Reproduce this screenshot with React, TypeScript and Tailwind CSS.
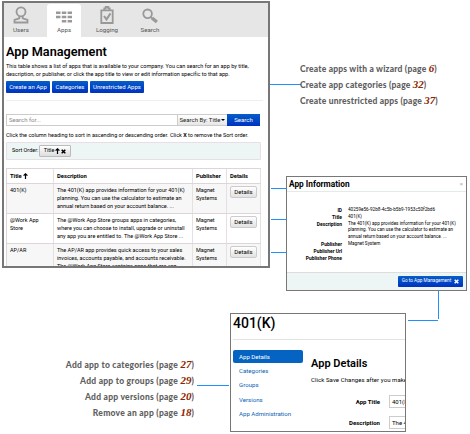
import type { ReactNode } from "react";

const tabs = ["Users", "Apps", "Logging", "Search"];

function TabIcon({ name }: { name: string }) {
  return (
    <svg width="18" height="18" viewBox="0 0 18 18" fill="none" stroke="#999" strokeWidth="1.8">
      {name === "Users" && (
        <>
          <circle cx="9" cy="5.8" r="4.5" />
          <path d="M7.3 10v2.4L2.5 14v2.5h13V14l-4.8-1.6V10" />
        </>
      )}
      {name === "Apps" && (
        <path d="M1 6.8h4.5M6.8 6.8h4.5M12.6 6.8H17M1 11h4.5M6.8 11h4.5M12.6 11H17M6.8 15.2h4.5M12.6 15.2H17" strokeWidth="2.6" />
      )}
      {name === "Logging" && (
        <>
          <path d="M3.3 4.4h11.4v12.6H3.3z" />
          <path d="M6.3 4V2.4h1.4V1h2.6v1.4h1.4V4" />
          <path d="M6 10l2.5 3.4 4-6" strokeWidth="2" />
        </>
      )}
      {name === "Search" && (
        <>
          <circle cx="6.6" cy="7.8" r="4.3" />
          <path d="M9.7 11l1.4 1.2" />
          <path d="M11 12l4.9 4" strokeWidth="3.4" />
        </>
      )}
    </svg>
  );
}

function Blue({ children, className }: { children: ReactNode; className: string }) {
  return (
    <button
      className={`flex shrink-0 items-center justify-center whitespace-nowrap bg-linear-to-b from-[#0a5cc8] to-[#0230c0] leading-none text-white ${className}`}
    >
      {children}
    </button>
  );
}

function SmallX() {
  return (
    <svg width="5" height="5" viewBox="0 0 5 5" stroke="currentColor" strokeWidth="1.5">
      <path d="M.7.7l3.6 3.6M4.3.7L.7 4.3" />
    </svg>
  );
}

function UpArrow() {
  return (
    <svg width="5" height="6" viewBox="0 0 5 6" stroke="currentColor" fill="none" strokeWidth="1.2">
      <path d="M2.5 6V1M.6 2.7L2.5.8l1.9 1.9" />
    </svg>
  );
}

const appText = [
  "The 401(K) app provides information for your 401(K)",
  "planning. You can use the calculator to estimate an",
  "annual return based on your account balance. ...",
];

const rows = [
  { title: ["401(K)"], text: appText, bg: "bg-[#f7f7f7]" },
  {
    title: ["@Work App", "Store"],
    text: [
      "The @Work App Store groups apps in categories,",
      "where you can choose to install, upgrade or uninstall",
      "any app you are entitled to. The @Work App Store ...",
    ],
    bg: "bg-white",
  },
  {
    title: ["AP/AR"],
    text: [
      "The AP/AR app provides quick access to your sales",
      "invoices, accounts payable, and accounts receivable.",
      "The @Work App Store contains apps that are can",
    ],
    bg: "bg-[#f7f7f7]",
  },
];

function Lines({ lines }: { lines: string[] }) {
  return (
    <>
      {lines.map((l) => (
        <div key={l}>{l}</div>
      ))}
    </>
  );
}

const grid = "grid grid-cols-[47px_139px_34px_34px]";

function Management() {
  return (
    <section className="absolute left-[2px] top-[1px] flex h-[267px] w-[268px] flex-col overflow-hidden border-2 border-[#777] bg-white text-black">
      <nav className="flex h-[34px] shrink-0 gap-[9px] bg-[#e6e6e6]">
        {tabs.map((t) => (
          <div
            key={t}
            className={`flex w-[34px] flex-col items-center text-[6.2px] leading-[8px] text-[#555] ${t === "Apps" ? "mt-[1px] rounded-t-[3px] bg-white pt-[2px]" : "pt-[3px]"}`}
          >
            <TabIcon name={t} />
            <span className="mt-[2px]">{t}</span>
          </div>
        ))}
      </nav>
      <div className="flex flex-col pl-[2px] pr-[5px]">
        <h1 className="mt-[6px] h-[18px] whitespace-nowrap text-[12.7px] font-semibold leading-[17px]">App Management</h1>
        <div className="mt-[1px] whitespace-nowrap text-[5.55px] leading-[8px]">
          <p>This table shows a list of apps that is available to your company. You can search for an app by title,</p>
          <p className="tracking-[-0.02px]">description, or publisher, or click the app title to view or edit information specific to that app.</p>
        </div>
        <div className="mt-[3px] flex gap-[2px] text-[6px]">
          <Blue className="h-[12px] w-[44px] rounded-[1px]">Create an App</Blue>
          <Blue className="h-[12px] w-[36px] rounded-[1px]">Categories</Blue>
          <Blue className="h-[12px] w-[54px] rounded-[1px]">Unrestricted Apps</Blue>
        </div>
        <hr className="mt-[7px] border-[#eee]" />
        <div className="mt-[13px] flex h-[12px] w-[254px] text-[6px] leading-none">
          <div className="flex flex-1 items-center border border-[#ccc] pl-[2px] text-[#888]">Search for...</div>
          <div className="flex w-[49px] items-center justify-center gap-[1px] border-y border-[#ccc] bg-linear-to-b from-white to-[#e6e6e6] text-[#222]">
            Search By: Title
            <svg width="4" height="3" viewBox="0 0 4 3">
              <path d="M0 0h4L2 2z" />
            </svg>
          </div>
          <Blue className="w-[33px]">Search</Blue>
        </div>
        <p className="mt-[5px] whitespace-nowrap text-[5.5px] leading-[8px]">
          Click the column heading to sort in ascending or descending order. Click <b>X</b> to remove the Sort order.
        </p>
        <div className="mt-[3px] flex h-[18px] w-[255px] items-center rounded-[1px] border border-[#e6dfe6] bg-[#edf6f5] pl-[5px] text-[5.5px] leading-none">
          <span className="w-[27px] whitespace-nowrap">Sort Order:</span>
          <button className="flex h-[12px] w-[32px] items-center justify-center gap-[1px] rounded-[1px] border border-[#bbb] bg-linear-to-b from-white to-[#ddd]">
            Title
            <UpArrow />
            <SmallX />
          </button>
        </div>
        <div className="mt-[8px] w-[255px] border-l border-t border-[#ded5da] text-[5.5px] leading-[8px]">
          <div className={`${grid} h-[14px] whitespace-nowrap text-[5.8px] font-bold leading-[14px] *:border-r *:border-[#e6dfe4] *:pl-[3px]`}>
            <div className="flex items-center gap-[1px]">
              Title <UpArrow />
            </div>
            <div>Description</div>
            <div>Publisher</div>
            <div>Details</div>
          </div>
          {rows.map((r) => (
            <div
              key={r.title[0]}
              className={`${grid} h-[30px] whitespace-nowrap border-t border-[#ded5da] *:h-[29px] *:border-r *:border-[#e6dfe4] *:pl-[3px] *:pt-[2px] ${r.bg}`}
            >
              <div>
                <Lines lines={r.title} />
              </div>
              <div>
                <Lines lines={r.text} />
              </div>
              <div>
                <Lines lines={["Magnet", "Systems"]} />
              </div>
              <div>
                <button className="flex h-[12px] w-[27px] items-center justify-center rounded-[2px] border border-[#ccc] bg-linear-to-b from-white to-[#e2e2e2] text-[6px] leading-none">
                  Details
                </button>
              </div>
            </div>
          ))}
        </div>
      </div>
    </section>
  );
}

const info: [string, string[]][] = [
  ["ID", ["40259e56-92b8-4c5b-b5b9-1953c50f2bd6"]],
  ["Title", ["401(K)"]],
  ["Description", appText],
  ["Publisher", ["Magnet System"]],
  ["Publisher Url", [""]],
  ["Publisher Phone", [""]],
];

function Information() {
  return (
    <section className="absolute left-[286px] top-[176px] flex h-[115px] w-[181px] flex-col border border-[#777] bg-white">
      <header className="flex h-[15px] shrink-0 items-center justify-between border-b border-[#e2eaea] pl-[2px] pr-[3px]">
        <h2 className="whitespace-nowrap text-[8.3px] font-bold leading-none">App Information</h2>
        <span className="text-[6px] leading-none text-[#aaa]">×</span>
      </header>
      <dl className="mt-[15px] flex-1 whitespace-nowrap leading-[6.8px]">
        {info.map(([k, v]) => (
          <div key={k} className="flex gap-[6px]">
            <dt className="w-[55px] shrink-0 text-right text-[4.9px] font-bold">{k}</dt>
            <dd className="text-[4.65px]">
              <Lines lines={v} />
            </dd>
          </div>
        ))}
      </dl>
      <footer className="flex h-[18px] items-center justify-end border-t border-[#ddd] bg-[#edf6f5] pr-[3px]">
        <Blue className="h-[11px] w-[65px] gap-[3px] rounded-[1px] text-[4.7px]">
          Go to App Management <SmallX />
        </Blue>
      </footer>
    </section>
  );
}

function Details() {
  return (
    <section className="absolute left-[230px] top-[313px] flex h-[119px] w-[176px] flex-col overflow-hidden border border-[#777] bg-white">
      <h1 className="ml-[2px] h-[26px] border-b border-[#e3e3e3] text-[14px] font-medium leading-[19px]">401(K)</h1>
      <div className="flex pl-[2px]">
        <nav className="mt-[10px] w-[70px] shrink-0 text-[6.1px] leading-[14.4px] text-[#0a5fb5]">
          <div className="h-[13px] rounded-[2px] bg-[#0563c1] pl-[6px] leading-[13px] text-white">App Details</div>
          <div className="pl-[6px] pt-[1px]">
            <Lines lines={["Categories", "Groups", "Versions", "App Administration"]} />
          </div>
        </nav>
        <div className="ml-[8px] w-[120px] shrink-0 whitespace-nowrap">
          <h2 className="mt-[16px] text-[11px] font-semibold leading-[16px]">App Details</h2>
          <p className="mt-[4px] text-[6px] leading-[8px] tracking-[0.08px]">Click Save Changes after you make</p>
          {[
            ["App Title", "401(K)"],
            ["Description", "The 401"],
          ].map(([k, v]) => (
            <div key={k} className="mt-[13px] flex h-[8px] items-center text-[6px]">
              <b className="w-[69px] text-right">{k}</b>
              <span className="ml-[9px] flex h-[13px] w-[40px] shrink-0 items-center border border-[#ccc] pl-[2px]">{v}</span>
            </div>
          ))}
        </div>
      </div>
    </section>
  );
}

function Note({ text, page }: { text: string; page: string }) {
  return (
    <li className="h-[16px] whitespace-nowrap">
      {text} (page{" "}
      <i className="font-['Liberation_Serif',serif] text-[11px] leading-none tracking-normal text-[#8b2500]">{page}</i>)
    </li>
  );
}

const connectors = [
  "left-[270px] top-[84px] h-px w-[31px]",
  "left-[271px] top-[188px] h-px w-[15px]",
  "left-[271px] top-[219px] h-px w-[15px]",
  "left-[271px] top-[252px] h-px w-[15px]",
  "left-[438px] top-[291px] h-[28px] w-px",
  "left-[408px] top-[320px] h-px w-[30px]",
  "left-[197px] top-[385px] h-px w-[32px]",
];

export default function App() {
  return (
    <main className="relative h-[434px] w-[470px] overflow-hidden bg-white font-[Roboto,sans-serif] text-black">
      <Management />
      <Information />
      <Details />
      {connectors.map((c) => (
        <div key={c} className={`absolute bg-[#1e90ff] ${c}`} />
      ))}
      <ul className="absolute left-[300px] top-[61px] font-[Lato,sans-serif] text-[8.5px] font-black leading-[16px] tracking-[0.2px] text-[#606060]">
        <Note text="Create apps with a wizard" page="6" />
        <Note text="Create app categories" page="32" />
        <Note text="Create unrestricted apps" page="37" />
      </ul>
      <ul className="absolute right-[276px] top-[357px] text-right font-[Lato,sans-serif] text-[8.5px] font-black leading-[16px] tracking-[0.25px] text-[#606060]">
        <Note text="Add app to categories" page="27" />
        <Note text="Add app to groups" page="29" />
        <Note text="Add app versions" page="20" />
        <Note text="Remove an app" page="18" />
      </ul>
    </main>
  );
}
